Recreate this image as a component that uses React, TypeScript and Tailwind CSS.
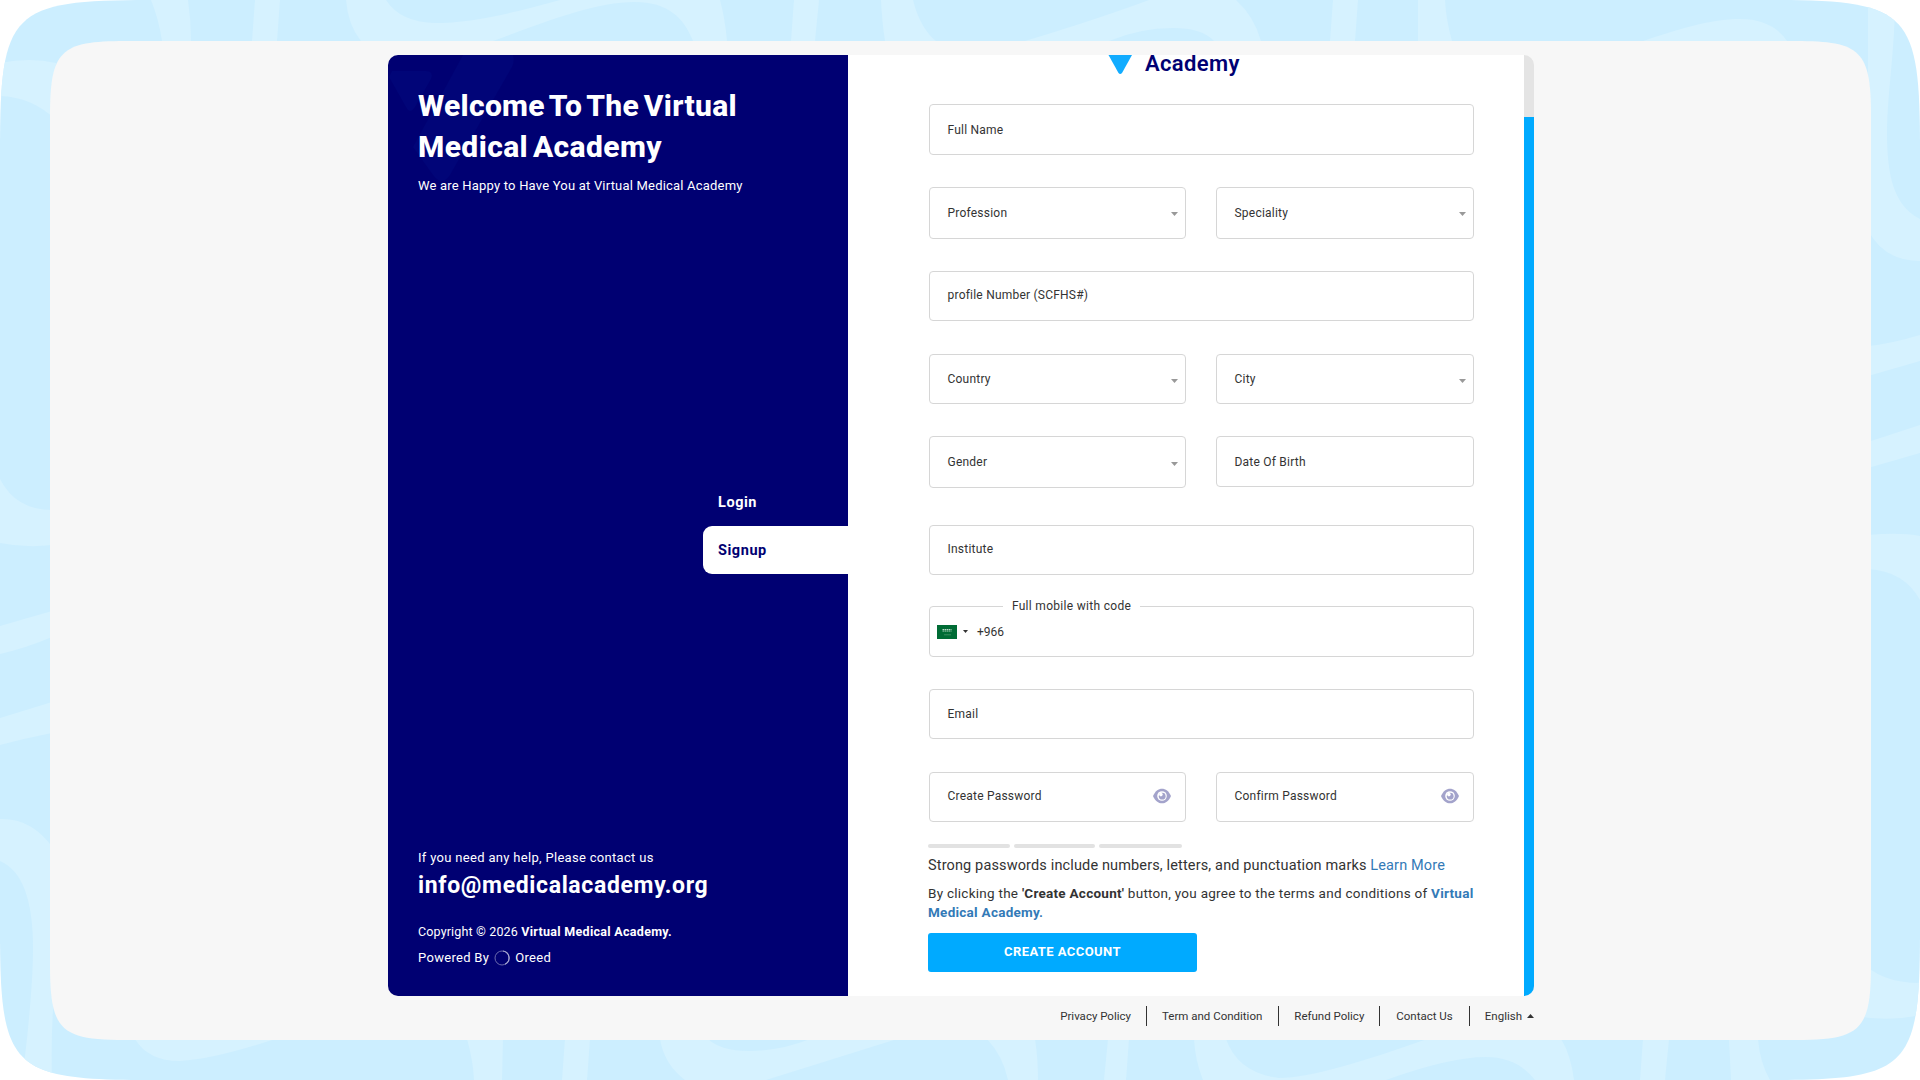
import { clsx } from 'clsx';
import type { ReactNode } from 'react';

function Backdrop() {
  return (
    <svg className="absolute inset-0" width="1920" height="1080" viewBox="0 0 1920 1080">
      <defs>
        <clipPath id="frame">
          <path d="M0 150C0 11 11 0 150 0H1770C1909 0 1920 11 1920 150V930C1920 1069 1909 1080 1770 1080H150C11 1080 0 1069 0 930Z" />
        </clipPath>
      </defs>
      <g clipPath="url(#frame)">
        <rect width="1920" height="1080" fill="#cceeff" />
        <g fill="#d6f2ff">
          {/* Top edge */}
          <path d="M151 0Q159 20 162 41H191Q191 20 188 0Z" />
          <path d="M255 0L252 41H277L280 0Z" />
          <path d="M346 0Q348 25 361 41H493C545 22 595 2 635 2C668 2 684 18 693 41H727Q725 18 720 0H560C510 14 470 23 435 23Q400 22 386 0Z" />
          <path d="M794 0L791 41H815L819 0Z" />
          <path d="M881 0Q882 22 885 41H936Q920 28 913 0Z" />
          <path d="M1149 0Q1095 20 1025 41H1109Q1140 28 1173 28Q1202 28 1214 41H1261Q1254 16 1236 0Z" />
          <path d="M1333 0L1330 41H1355L1358 0Z" />
          <path d="M1418 0V41H1452Q1446 20 1445 0Z" />
          <path d="M1643 41C1680 29 1710 19 1740 19Q1772 19 1787 41Z" />
          {/* Right edge */}
          <path d="M1868 0V230Q1884 261 1920 261V219C1893 205 1887 175 1887 131C1887 95 1895 50 1895 0Z" />
          <path d="M1868 346Q1890 344 1920 335V361L1868 376Z" />
          <path d="M1868 442L1920 425V453L1868 468Z" />
          <path d="M1868 535Q1900 532 1920 536V600Q1904 571 1868 569Z" />
          <path d="M1860 960Q1880 983 1920 983V1015Q1890 1022 1855 1016Z" />
          {/* Bottom edge */}
          <path d="M135 1039Q148 1061 180 1061Q215 1059 275 1039Z" />
          <path d="M467 1039Q473 1060 474 1080H502L503 1039Z" />
          <path d="M565 1039L562 1080H587L590 1039Z" />
          <path d="M660 1039Q664 1064 685 1080H766Q830 1060 897 1039H810Q780 1051 748 1051Q721 1051 708 1039Z" />
          <path d="M987 1039Q1003 1056 1008 1080H1038Q1038 1058 1035 1039Z" />
          <path d="M1108 1039L1104 1080H1126L1129 1039Z" />
          <path d="M1194 1039Q1195 1060 1203 1080H1386Q1450 1057 1486 1057Q1517 1057 1535 1080H1574Q1571 1055 1561 1039H1427C1365 1061 1310 1078 1279 1078Q1238 1073 1226 1039Z" />
          <path d="M1643 1039L1640 1080H1665L1669 1039Z" />
          <path d="M1729 1039L1731 1080H1770Q1760 1063 1758 1039Z" />
          {/* Left edge */}
          <path d="M0 63Q30 57 56 63V120Q32 97 0 96Z" />
          <path d="M0 479Q16 510 52 510V545Q25 548 0 543Z" />
          <path d="M0 626L52 611V637Q26 648 0 654Z" />
          <path d="M0 718L52 702V733Q26 738 0 745Z" />
          <path d="M0 819Q32 818 53 848V1010Q51 1040 52 1080H22C26 1050 33 990 33 948Q33 875 0 861Z" />
        </g>
      </g>
    </svg>
  );
}

function SideMark() {
  return (
    <svg className="absolute left-0 top-0" width="130" height="140" viewBox="0 0 130 140" fill="#010578">
      <path d="M4 16H38Q46 16 43 24L27 52Q22 60 18 52L1 22Z" />
      <path d="M75 0H125Q127 6 124 12L62 120Q54 132 45 120L25 92Z" />
    </svg>
  );
}

function Caret({ className }: { className?: string }) {
  return (
    <svg className={className} width="7" height="4" viewBox="0 0 7 4">
      <path d="M0 0H7L3.5 4Z" fill="currentColor" />
    </svg>
  );
}

function Eye() {
  return (
    <svg width="18" height="18" viewBox="0 0 18 18">
      <path d="M0 9C4-.8 14-.8 18 9C14 18.800 4 18.800 0 9Z" fill="#a3a3cb" />
      <circle cx="9" cy="9" r="4.800" fill="#fff" />
      <circle cx="9.200" cy="9.200" r="3.400" fill="#a3a3cb" />
      <circle cx="7.900" cy="7.600" r="1.800" fill="#fff" />
    </svg>
  );
}

function Flag() {
  return (
    <svg width="20" height="14" viewBox="0 0 20 14">
      <rect width="20" height="14" fill="#006c35" />
      <path d="M5.500 4.500h9M5.500 6h9" stroke="#b9d8c6" strokeWidth="1.200" strokeDasharray="1.600 .5" />
      <path d="M7 9.800h7" stroke="#3f9265" strokeWidth=".9" />
    </svg>
  );
}

type FieldProps = {
  label: string;
  className: string;
  select?: boolean;
  password?: boolean;
};

function Field({ label, className, select, password }: FieldProps) {
  return (
    <div
      className={clsx(
        'flex items-center justify-between rounded-[4px] border border-[#d6d6d6] pl-[17.500px] text-[12px] tracking-[0.220px]',
        select ? 'pr-[7px]' : 'pr-[14px]',
        className
      )}
    >
      <span>{label}</span>
      {select && <Caret className="mt-[3px] text-[#999]" />}
      {password && <Eye />}
    </div>
  );
}

function Row({ children, className }: { children: ReactNode; className: string }) {
  return <div className={clsx('grid grid-cols-[257px_258px] items-start gap-[30px]', className)}>{children}</div>;
}

function Sidebar() {
  return (
    <aside className="relative flex w-[460px] flex-col rounded-l-[10px] bg-[#000072] pl-[30px] text-white">
      <SideMark />
      <h1 className="relative mt-[30px] text-[30px] font-extrabold leading-[41px] [word-spacing:-3px]">
        <span className="tracking-[0.300px]">Welcome To The Virtual</span>
        <br />
        <span className="tracking-[0.400px]">Medical Academy</span>
      </h1>
      <p className="relative mt-[9px] text-[13px] leading-5 tracking-[0.200px]">
        We are Happy to Have You at Virtual Medical Academy
      </p>

      {/* Login / Signup tabs */}
      <nav className="mt-[282px] flex w-[145px] flex-col self-end text-[14.500px] font-bold tracking-[0.550px]">
        <a className="flex h-12 items-center pl-[15px] pt-[2px]">Login</a>
        <a className="flex h-12 items-center rounded-l-[9px] bg-white pl-[15px] pt-[2px] text-[#000072]">Signup</a>
      </nav>

      <div className="mt-auto pb-[28px]">
        <p className="text-[13px] leading-5 tracking-[0.310px]">If you need any help, Please contact us</p>
        <p className="mt-1 text-[23px] font-bold leading-7 tracking-[0.650px]">info@medicalacademy.org</p>
        <p className="mt-[22px] text-[12.500px] leading-5 tracking-[0.150px]">
          Copyright © 2026 <b className="tracking-[0.300px]">Virtual Medical Academy.</b>
        </p>
        <p className="mt-[6px] flex items-center text-[13px] leading-5 tracking-[0.300px]">
          <span>Powered By</span>
          <svg className="mx-[5px]" width="16" height="16" viewBox="0 0 16 16" fill="none">
            <circle cx="8" cy="8" r="7" stroke="#6a6aad" />
            <path d="M9 1A7 7 0 0 1 11 14.300" stroke="#a9a9d2" strokeWidth="1.200" />
          </svg>
          <span>Oreed</span>
        </p>
      </div>
    </aside>
  );
}

function SignupForm() {
  return (
    <section className="flex h-[941px] w-[676px] flex-col overflow-hidden bg-white pl-[81px] text-[#333]">
      {/* Logo, scrolled partly out of view */}
      <div className="flex h-[49px] items-start pl-[179px]">
        <svg width="24" height="19" viewBox="0 0 24 19">
          <path d="M0.500 0H24L14 18Q12.200 20 10.500 18Z" fill="#12acff" />
        </svg>
        <span className="ml-[13px] mt-px text-[22px] font-semibold leading-[16px] tracking-[0.350px] text-[#000072]">
          Academy
        </span>
      </div>

      <Field label="Full Name" className="h-[51px] w-[545px]" />
      <Row className="mt-8">
        <Field label="Profession" className="h-[52px] pb-px" select />
        <Field label="Speciality" className="h-[52px] pb-px" select />
      </Row>
      <Field label="profile Number (SCFHS#)" className="mt-8 h-[50px] w-[545px] pb-[2px]" />
      <Row className="mt-[33px]">
        <Field label="Country" className="h-[50px]" select />
        <Field label="City" className="h-[50px]" select />
      </Row>
      <Row className="mt-8">
        <Field label="Gender" className="h-[52px]" select />
        <Field label="Date Of Birth" className="h-[51px]" />
      </Row>
      <Field label="Institute" className="mt-[37px] h-[50px] w-[545px] pb-[2px]" />

      {/* Mobile number */}
      <div className="relative mt-[31px] flex h-[51px] w-[545px] items-center rounded-[4px] border border-[#d6d6d6] pl-[7px] text-[12px]">
        <span className="absolute left-[73px] top-[-9px] w-[137px] bg-white text-center leading-4 tracking-[0.300px]">
          Full mobile with code
        </span>
        <Flag />
        <Caret className="ml-[6px] h-[3px] w-[5px]" />
        <span className="ml-[9px]">+966</span>
      </div>

      <Field label="Email" className="mt-8 h-[50px] w-[545px]" />
      <Row className="mt-[33px]">
        <Field label="Create Password" className="h-[50px] pb-[2px]" password />
        <Field label="Confirm Password" className="h-[50px] pb-[2px]" password />
      </Row>

      <div className="-ml-px">
        {/* Password strength */}
        <div className="mt-[22px] flex gap-1">
          <div className="h-1 w-[82px] rounded-sm bg-[#e2e2e2]" />
          <div className="h-1 w-[81px] rounded-sm bg-[#e2e2e2]" />
          <div className="h-1 w-[83px] rounded-sm bg-[#e2e2e2]" />
        </div>
        <p className="mt-[8px] whitespace-nowrap text-[14.500px] leading-5 tracking-[0.140px]">
          Strong passwords include numbers, letters, and punctuation marks{' '}
          <a className="text-[#337ab7]">Learn More</a>
        </p>
        <p className="mt-[8px] whitespace-nowrap text-[13.500px] leading-[19px] tracking-[0.260px]">
          By clicking the <b>'Create Account'</b> button, you agree to the terms and conditions of{' '}
          <b className="text-[#337ab7]">
            Virtual
            <br />
            Medical Academy.
          </b>
        </p>
        <button className="mt-[11px] h-[39px] w-[269px] rounded-[3px] bg-[#00aaff] pb-[2px] text-[13px] font-bold tracking-[0.440px] text-white">
          CREATE ACCOUNT
        </button>
      </div>
    </section>
  );
}

function FooterLinks() {
  return (
    <footer className="ml-auto mt-[10px] flex h-5 text-[11.500px] leading-5 text-[#333]">
      <a className="border-r border-[#333] pr-[15px]">Privacy Policy</a>
      <a className="border-r border-[#333] pl-[15px] pr-4">Term and Condition</a>
      <a className="border-r border-[#333] px-[15px]">Refund Policy</a>
      <a className="border-r border-[#333] px-4">Contact Us</a>
      <a className="flex items-center gap-[5px] pl-[15px]">
        English
        <Caret className="rotate-180" />
      </a>
    </footer>
  );
}

export default function App() {
  return (
    <main className="relative h-[1080px] w-[1920px] overflow-hidden bg-white font-[Roboto,'Liberation_Sans',sans-serif]">
      <Backdrop />
      <div className="relative px-[50px] pt-[41px]">
        <div className="flex h-[999px] w-[1821px] flex-col bg-[#f7f7f7] pl-[338px] pt-[14px] [clip-path:path('M0_75C0_10_10_0_75_0H1746C1811_0_1821_10_1821_75V924C1821_989_1811_999_1746_999H75C10_999_0_989_0_924Z')]">
          <div className="flex w-[1146px] flex-col">
            <div className="flex h-[941px]">
              <Sidebar />
              <SignupForm />
              {/* Scrollbar */}
              <div className="flex w-[10px] flex-col overflow-hidden rounded-r-[10px] bg-[#e4e4e4] pt-[62px]">
                <div className="grow bg-[#00aaff]" />
              </div>
            </div>
            <FooterLinks />
          </div>
        </div>
      </div>
    </main>
  );
}
